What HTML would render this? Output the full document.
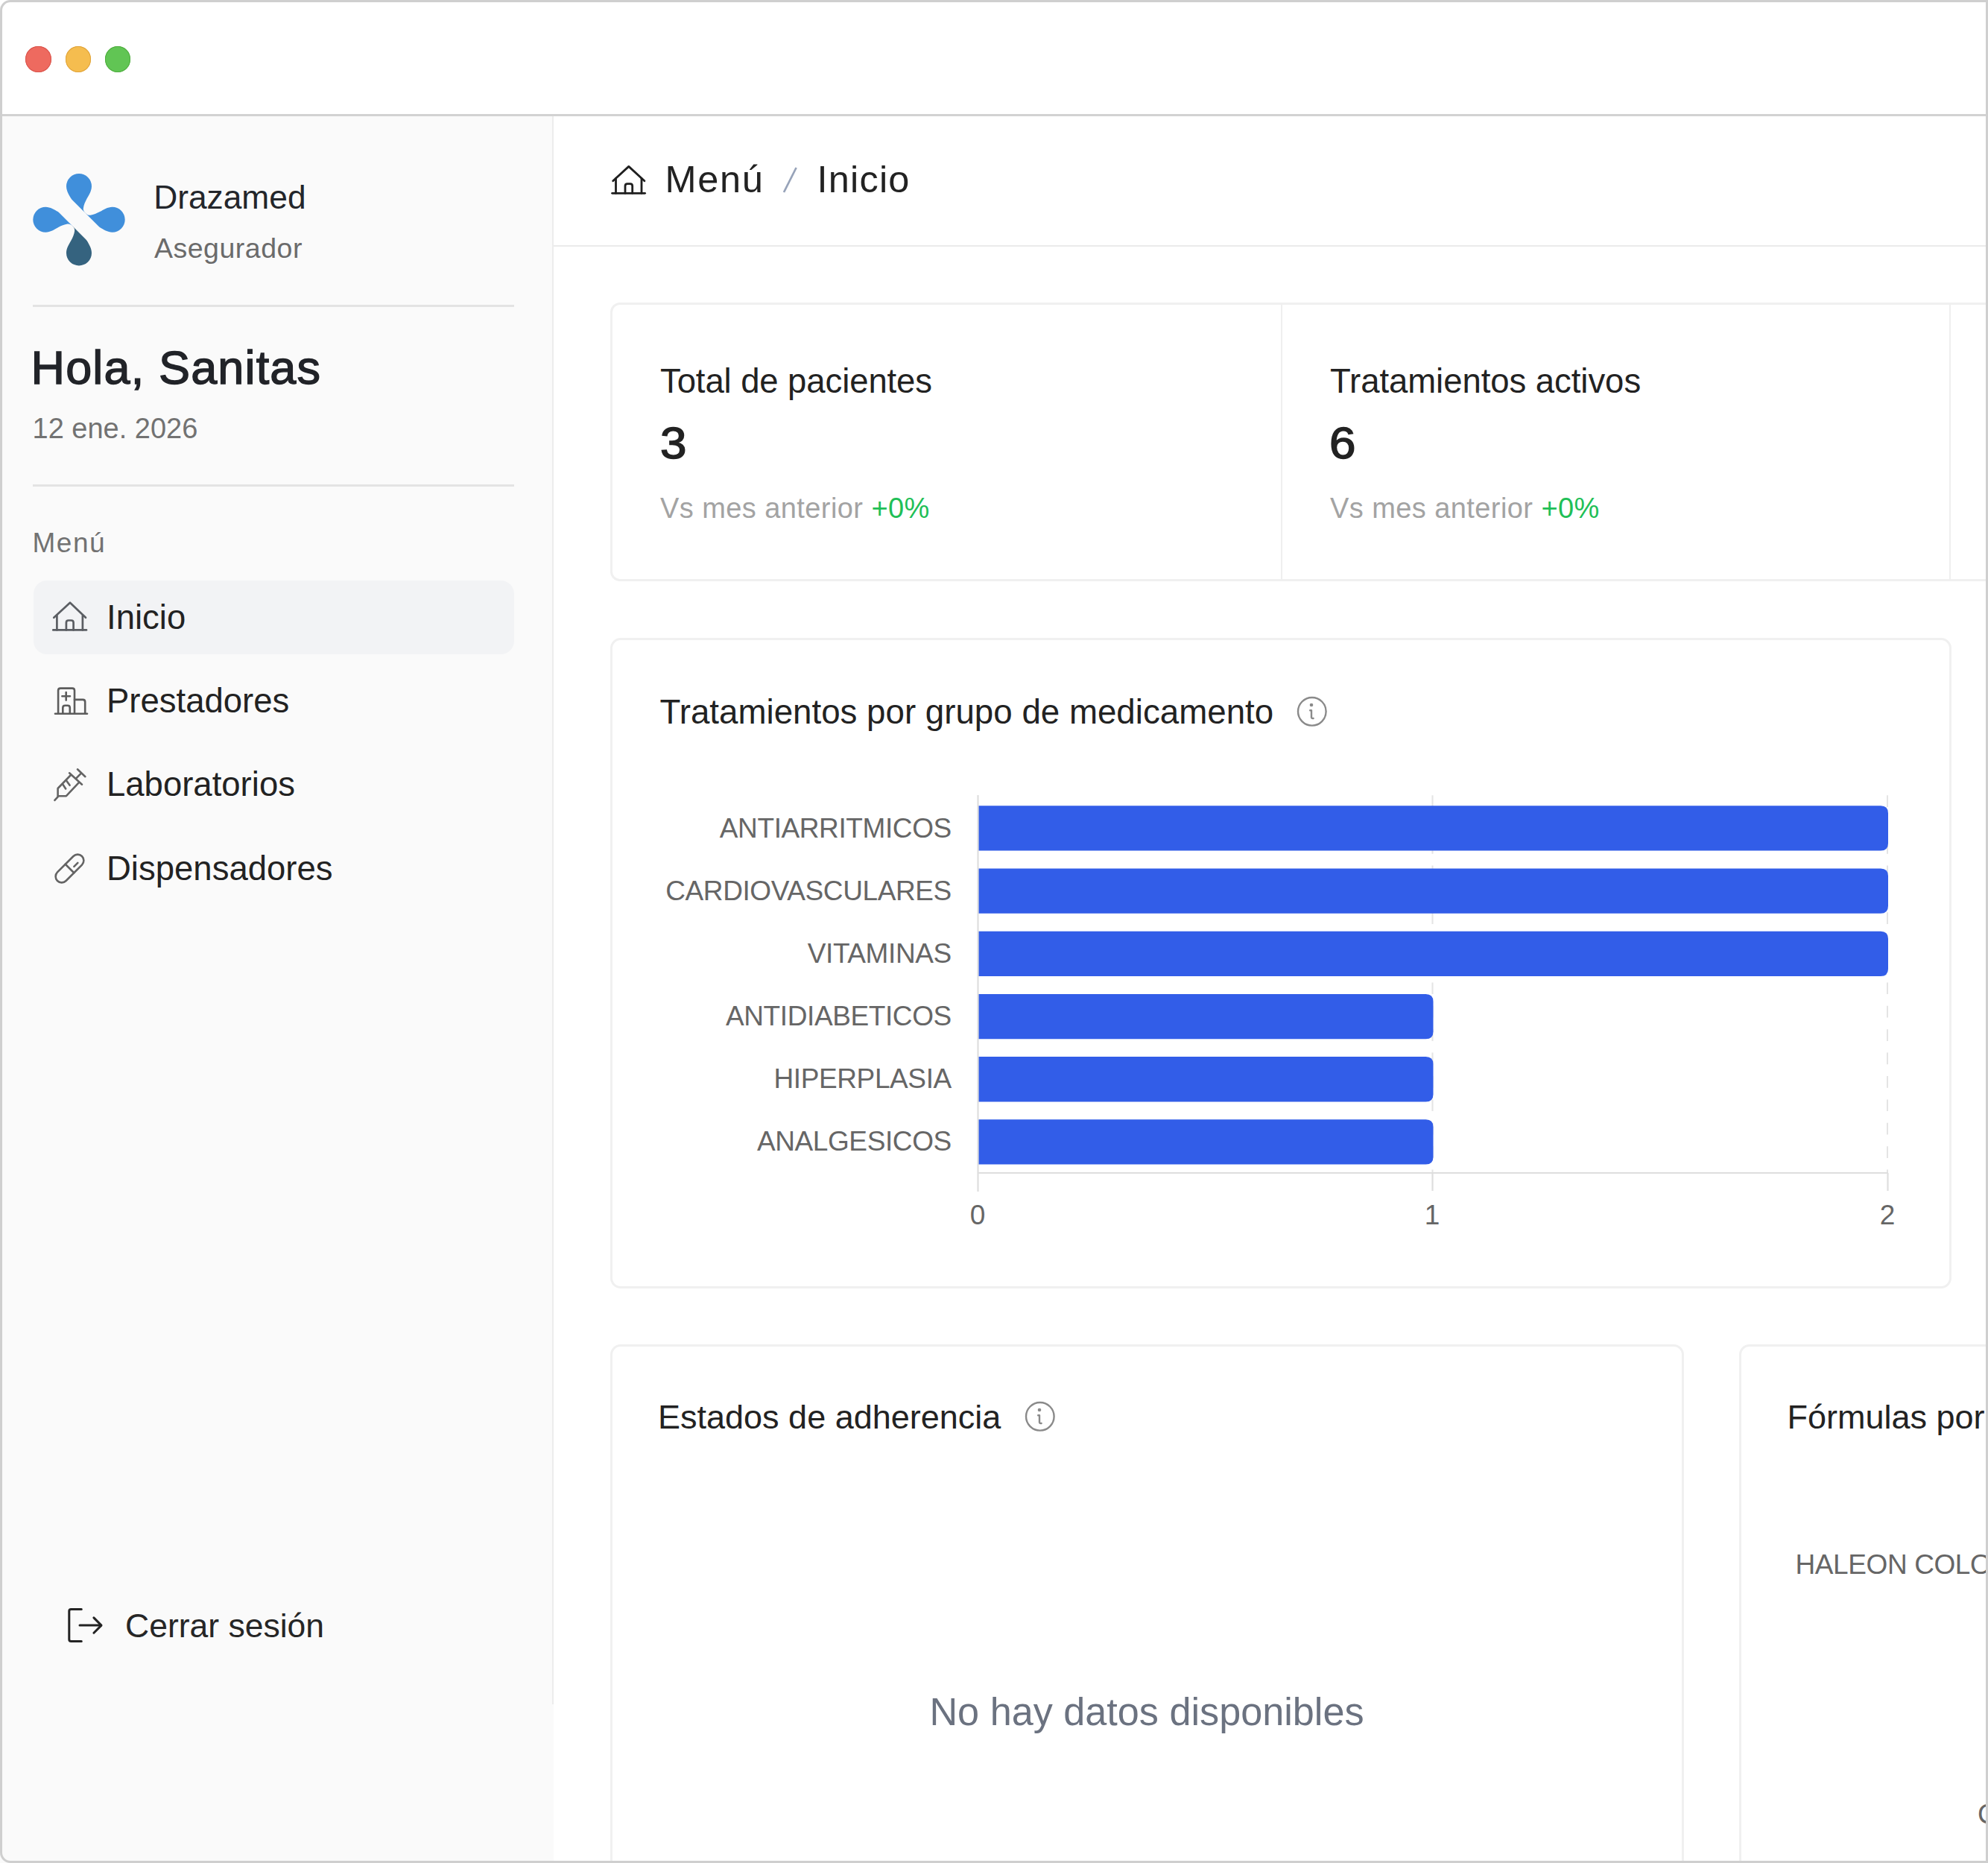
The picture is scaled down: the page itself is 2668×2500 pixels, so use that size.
<!DOCTYPE html>
<html>
<head>
<meta charset="utf-8">
<style>
html,body{margin:0;padding:0;background:#ffffff;}
body{width:2668px;height:2500px;position:relative;overflow:hidden;font-family:"Liberation Sans",sans-serif;}
#win{position:absolute;left:0;top:0;width:2668px;height:2500px;overflow:hidden;background:#fff;}
.t{position:absolute;white-space:nowrap;line-height:1;font-family:"Liberation Sans",sans-serif;}
.abs{position:absolute;}
svg{position:absolute;overflow:visible;}
</style>
</head>
<body>
<div id="win">
  <!-- title bar -->
  <div class="abs" style="left:0;top:0;width:2668px;height:154px;background:#fff;"></div>
  <div class="abs" style="left:0;top:153px;width:2668px;height:3px;background:#d2d2d2;"></div>
  <div class="abs" style="left:34.3px;top:62.2px;width:34.5px;height:34.5px;border-radius:50%;background:#ee6a5f;box-shadow:inset 0 0 0 1px #d9534b;"></div>
  <div class="abs" style="left:87.5px;top:62.2px;width:34.5px;height:34.5px;border-radius:50%;background:#f5bd4f;box-shadow:inset 0 0 0 1px #e0a33a;"></div>
  <div class="abs" style="left:140.6px;top:62.2px;width:34.5px;height:34.5px;border-radius:50%;background:#61c554;box-shadow:inset 0 0 0 1px #4fad3f;"></div>

  <!-- sidebar -->
  <div class="abs" style="left:0;top:156px;width:743px;height:2344px;background:#fafafa;"></div>
  <div class="abs" style="left:741px;top:156px;width:2px;height:2131px;background:#ececec;"></div>


  <!-- logo -->
  <svg style="left:30px;top:220px" width="160" height="160" viewBox="30 220 160 160">
    <defs><path id="drop" d="M 8.65 -8.65 C 6.2 -11, 5.6 -13.2, 5.9 -15.5 C 6.4 -19.5, 8.4 -24, 10.6 -28.1 C 13.2 -32.8, 17 -38.5, 17 -44.7 A 17 17 0 0 0 -17 -44.7 C -17 -38.5, -13.2 -32.8, -10.6 -28.1 C -8.6 -24.5, -7.4 -22, -7.1 -20.9 L 0 0 Z"/></defs>
    <g transform="translate(106 294.7)">
      <use href="#drop" fill="#408fdb"/>
      <use href="#drop" fill="#408fdb" transform="matrix(0,-1,-1,0,0,0)"/>
      <use href="#drop" fill="#408fdb" transform="matrix(0,1,1,0,0,0)"/>
      <use href="#drop" fill="#35637f" transform="rotate(180)"/>
      <rect x="-80" y="-12.25" width="160" height="24.5" fill="#fafafa" transform="rotate(45)"/>
    </g>
  </svg>
  <div class="t" style="left:206.2px;top:242.5px;font-size:44.3px;color:#23262b;">Drazamed</div>
  <div class="t" style="left:207px;top:314.8px;font-size:37.5px;letter-spacing:0.5px;color:#6b6b6b;">Asegurador</div>
  <div class="abs" style="left:44px;top:409px;width:646px;height:3px;background:#e3e3e3;"></div>
  <div class="t" style="left:41.5px;top:461.8px;font-size:63px;letter-spacing:1.15px;-webkit-text-stroke:1.4px #212328;color:#212328;">Hola, Sanitas</div>
  <div class="t" style="left:43.5px;top:556px;font-size:38px;color:#727272;">12 ene. 2026</div>
  <div class="abs" style="left:44px;top:650px;width:646px;height:3px;background:#e3e3e3;"></div>
  <div class="t" style="left:43.5px;top:709.5px;font-size:37px;letter-spacing:1.5px;color:#727272;">Menú</div>
  <div class="abs" style="left:45px;top:779px;width:645px;height:99px;border-radius:18px;background:#f2f3f5;"></div>
  <!-- home icon -->
  <svg style="left:60px;top:795px" width="70" height="60" viewBox="60 795 70 60" fill="none" stroke="#5b5e63" stroke-width="2.7" stroke-linecap="round" stroke-linejoin="round">
    <path d="M72.3 828.8 L94 808.7 L115 828.8"/>
    <path d="M76.4 826 V845.4 M110.9 826 V845.4"/>
    <path d="M71.3 845.4 H116"/>
    <path d="M88.9 845.4 V835.5 Q88.9 832.5 91.9 832.5 H95.6 Q98.6 832.5 98.6 835.5 V845.4"/>
  </svg>
  <div class="t" style="left:143px;top:805.8px;font-size:45.5px;color:#222;">Inicio</div>
  <!-- hospital icon -->
  <svg style="left:60px;top:910px" width="70" height="60" viewBox="60 910 70 60" fill="none" stroke="#5c5c5c" stroke-width="2.6" stroke-linecap="round" stroke-linejoin="round">
    <path d="M74 957.7 H117"/>
    <path d="M78.1 957.7 V926.6 Q78.1 923.6 81.1 923.6 H97 Q100 923.6 100 926.6 V957.7"/>
    <path d="M100 938.9 H111.2 Q114.2 938.9 114.2 941.9 V957.7"/>
    <path d="M83.4 934.3 H94 M88.7 929 V939.6"/>
    <path d="M84.3 957.7 V949.8 Q84.3 946.8 87.3 946.8 H90.8 Q93.8 946.8 93.8 949.8 V957.7"/>
  </svg>
  <div class="t" style="left:143px;top:917.8px;font-size:45.5px;color:#222;">Prestadores</div>
  <!-- vaccine icon -->
  <svg style="left:60px;top:1020px" width="70" height="65" viewBox="60 1020 70 65" fill="none" stroke="#646464" stroke-width="2.6" stroke-linecap="round" stroke-linejoin="round">
    <path d="M104 1032.3 L114.4 1042.2"/>
    <path d="M108.2 1038.3 L102.3 1044.3"/>
    <path d="M93.1 1037.3 L110 1052.7"/>
    <path d="M105.4 1050.6 L88.9 1068.2 H77.6 V1058 L95 1040"/>
    <path d="M84.6 1053.1 L88.2 1058.4"/>
    <path d="M89.6 1048.2 L93.6 1053.8"/>
    <path d="M73.4 1073.9 L77.6 1069.3"/>
  </svg>
  <div class="t" style="left:143px;top:1030.1px;font-size:45.5px;color:#222;">Laboratorios</div>
  <!-- pill icon -->
  <svg style="left:60px;top:1135px" width="70" height="65" viewBox="60 1135 70 65" fill="none" stroke="#646464" stroke-width="2.6" stroke-linecap="round" stroke-linejoin="round">
    <g transform="rotate(-45 93.5 1165.5)">
      <rect x="70.2" y="1157.35" width="46.6" height="16.3" rx="8.15"/>
      <path d="M93.5 1157.35 V1173.65"/>
      <path d="M99.5 1167.8 H106.5"/>
    </g>
  </svg>
  <div class="t" style="left:143px;top:1143.1px;font-size:45.5px;color:#222;">Dispensadores</div>
  <!-- logout icon -->
  <svg style="left:80px;top:2145px" width="70" height="70" viewBox="80 2145 70 70" fill="none" stroke="#232323" stroke-width="3" stroke-linecap="round" stroke-linejoin="round">
    <path d="M109.3 2159.5 H95.4 Q92.8 2159.5 92.8 2162.1 V2199.9 Q92.8 2202.5 95.4 2202.5 H109.3"/>
    <path d="M107 2181.1 H135.5"/>
    <path d="M125.9 2170.9 L136 2181.1 L125.9 2191.2"/>
  </svg>
  <div class="t" style="left:168px;top:2160px;font-size:44.5px;color:#262626;">Cerrar sesión</div>



  <!-- header -->
  <div class="abs" style="left:743px;top:328.5px;width:1925px;height:2px;background:#ebebeb;"></div>
  <svg style="left:810px;top:210px" width="70" height="60" viewBox="810 210 70 60" fill="none" stroke="#1f1f1f" stroke-width="2.8" stroke-linecap="round" stroke-linejoin="round">
    <path d="M822.7 242.7 L843.8 223.4 L864.9 242.7"/>
    <path d="M826.5 239.5 V259.3 M861 239.5 V259.3"/>
    <path d="M821.6 259.3 H865.6"/>
    <path d="M839 259.3 V249.6 Q839 246.6 842 246.6 H845.7 Q848.7 246.6 848.7 249.6 V259.3"/>
  </svg>
  <div class="t" style="left:892.5px;top:216.3px;font-size:50.5px;letter-spacing:1.7px;color:#222;">Menú</div>
  <svg style="left:1040px;top:215px" width="40" height="50" viewBox="1040 215 40 50"><path d="M1052 258 L1068.6 225" stroke="#97a3b9" stroke-width="2.7" stroke-linecap="butt"/></svg>
  <div class="t" style="left:1096.5px;top:216.3px;font-size:50.5px;letter-spacing:1.2px;color:#222;">Inicio</div>

  <!-- stat cards -->
  <div class="abs" style="left:818.8px;top:406.3px;width:1901px;height:374px;border:3px solid #f0f0f0;border-radius:13px;box-sizing:border-box;background:#fff;"></div>
  <div class="abs" style="left:1718.5px;top:408px;width:2px;height:371px;background:#efefef;"></div>
  <div class="abs" style="left:2615.5px;top:408px;width:2px;height:371px;background:#efefef;"></div>
  <div class="t" style="left:886px;top:489.1px;font-size:45.5px;letter-spacing:-0.1px;color:#222;">Total de pacientes</div>
  <div class="t" style="left:885.5px;top:565.8px;font-size:59px;-webkit-text-stroke:1.5px #222;transform:scaleX(1.08);transform-origin:0 0;color:#222;">3</div>
  <div class="t" style="left:886px;top:662.8px;font-size:38px;letter-spacing:0.42px;color:#a3a3a3;">Vs mes anterior <span style="color:#1fbf57">+0%</span></div>
  <div class="t" style="left:1785px;top:489.1px;font-size:45.5px;letter-spacing:-0.05px;color:#222;">Tratamientos activos</div>
  <div class="t" style="left:1783.5px;top:565.8px;font-size:59px;-webkit-text-stroke:1.5px #222;transform:scaleX(1.08);transform-origin:0 0;color:#222;">6</div>
  <div class="t" style="left:1785px;top:662.8px;font-size:38px;letter-spacing:0.42px;color:#a3a3a3;">Vs mes anterior <span style="color:#1fbf57">+0%</span></div>

  <!-- chart card -->
  <div class="abs" style="left:818.8px;top:856px;width:1800px;height:872.5px;border:3px solid #f0f0f0;border-radius:14px;box-sizing:border-box;background:#fff;"></div>
  <div class="t" style="left:885.5px;top:933.1px;font-size:45.7px;color:#222;">Tratamientos por grupo de medicamento</div>
  <svg style="left:1730px;top:925px" width="60" height="60" viewBox="1730 925 60 60" fill="none" stroke="#8a8a8a" stroke-width="2.4" stroke-linecap="round" stroke-linejoin="round">
    <circle cx="1760.8" cy="954.8" r="18.8"/>
    <path d="M1758.2 953.2 H1760 V962.8 Q1760.3 964.3 1762.6 964"/>
    <circle cx="1760" cy="946" r="2.3" fill="#8a8a8a" stroke="none"/>
  </svg>
  <svg style="left:0;top:0" width="2668" height="2500" viewBox="0 0 2668 2500">
    <path d="M1922.5 1067.2 V1573 M2533 1067.2 V1573" stroke="#e4e4e4" stroke-width="2" stroke-dasharray="15.7 15.7" fill="none"/>
    <path d="M1313 1081.3 H2524.0 Q2534.0 1081.3 2534.0 1091.3 V1131.6 Q2534.0 1141.6 2524.0 1141.6 H1313 Z" fill="#325de8"/>
    <path d="M1313 1165.5 H2524.0 Q2534.0 1165.5 2534.0 1175.5 V1215.8 Q2534.0 1225.8 2524.0 1225.8 H1313 Z" fill="#325de8"/>
    <path d="M1313 1249.7 H2524.0 Q2534.0 1249.7 2534.0 1259.7 V1300.0 Q2534.0 1310.0 2524.0 1310.0 H1313 Z" fill="#325de8"/>
    <path d="M1313 1333.9 H1913.5 Q1923.5 1333.9 1923.5 1343.9 V1384.2 Q1923.5 1394.2 1913.5 1394.2 H1313 Z" fill="#325de8"/>
    <path d="M1313 1418.1 H1913.5 Q1923.5 1418.1 1923.5 1428.1 V1468.4 Q1923.5 1478.4 1913.5 1478.4 H1313 Z" fill="#325de8"/>
    <path d="M1313 1502.3 H1913.5 Q1923.5 1502.3 1923.5 1512.3 V1552.6 Q1923.5 1562.6 1913.5 1562.6 H1313 Z" fill="#325de8"/>
    <path d="M1312.5 1067 V1599 M1312 1574 H2534 M1922.5 1574 V1598 M2533.5 1574 V1598" stroke="#dedede" stroke-width="2.2" fill="none"/>
  </svg>
  <div class="t" style="left:876.8px;width:400px;text-align:right;top:1092.5px;font-size:37px;letter-spacing:-0.4px;color:#666;">ANTIARRITMICOS</div>
<div class="t" style="left:876.8px;width:400px;text-align:right;top:1177.0px;font-size:37px;letter-spacing:-0.4px;color:#666;">CARDIOVASCULARES</div>
<div class="t" style="left:876.8px;width:400px;text-align:right;top:1261.2px;font-size:37px;letter-spacing:-0.4px;color:#666;">VITAMINAS</div>
<div class="t" style="left:876.8px;width:400px;text-align:right;top:1345.3px;font-size:37px;letter-spacing:-0.4px;color:#666;">ANTIDIABETICOS</div>
<div class="t" style="left:876.8px;width:400px;text-align:right;top:1429.3px;font-size:37px;letter-spacing:-0.4px;color:#666;">HIPERPLASIA</div>
<div class="t" style="left:876.8px;width:400px;text-align:right;top:1513.2px;font-size:37px;letter-spacing:-0.4px;color:#666;">ANALGESICOS</div>

  <div class="t" style="left:1212px;width:200px;text-align:center;top:1611.7px;font-size:37px;color:#666;">0</div>
  <div class="t" style="left:1822px;width:200px;text-align:center;top:1611.7px;font-size:37px;color:#666;">1</div>
  <div class="t" style="left:2433px;width:200px;text-align:center;top:1611.7px;font-size:37px;color:#666;">2</div>

  <!-- estados card -->
  <div class="abs" style="left:818.8px;top:1803.5px;width:1441px;height:800px;border:3px solid #f0f0f0;border-radius:14px;box-sizing:border-box;background:#fff;"></div>
  <div class="t" style="left:883px;top:1879.4px;font-size:45px;color:#222;">Estados de adherencia</div>
  <svg style="left:1365px;top:1871px" width="60" height="60" viewBox="1730 925 60 60" fill="none" stroke="#8a8a8a" stroke-width="2.4" stroke-linecap="round" stroke-linejoin="round">
    <circle cx="1760.8" cy="954.8" r="18.8"/>
    <path d="M1758.2 953.2 H1760 V962.8 Q1760.3 964.3 1762.6 964"/>
    <circle cx="1760" cy="946" r="2.3" fill="#8a8a8a" stroke="none"/>
  </svg>
  <div class="t" style="left:820px;width:1438px;text-align:center;top:2270.6px;font-size:52.2px;color:#6b7280;">No hay datos disponibles</div>

  <!-- formulas card -->
  <div class="abs" style="left:2334.3px;top:1803.5px;width:800px;height:800px;border:3px solid #f0f0f0;border-radius:14px;box-sizing:border-box;background:#fff;"></div>
  <div class="t" style="left:2398.5px;top:1879px;font-size:45px;color:#222;">Fórmulas por</div>
  <div class="t" style="left:2409.5px;top:2081.2px;font-size:37px;letter-spacing:-0.4px;color:#666;">HALEON COLOMBIA</div>
  <div class="t" style="left:2654px;top:2416.2px;font-size:37px;color:#666;">C</div>


  <!-- window border overlay -->
  <div class="abs" style="left:0;top:0;width:2668px;height:2500px;border:3px solid #cfcfcf;border-radius:14px 0 0 14px;box-sizing:border-box;"></div>
</div>
</body>
</html>
